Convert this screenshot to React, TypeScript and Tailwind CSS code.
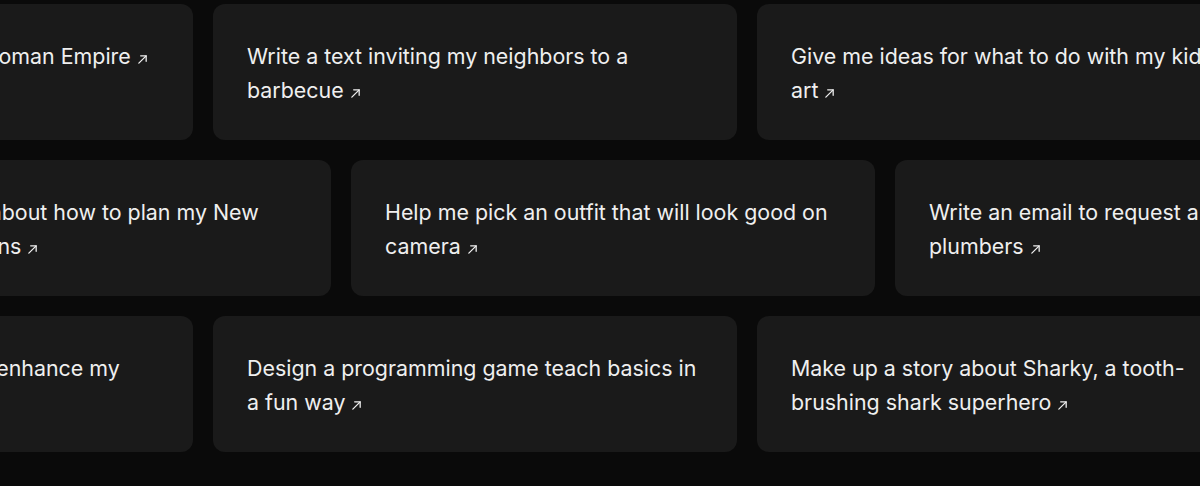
import React from 'react';

const rows: { offset: string; items: string[] }[] = [
  {
    offset: 'ml-[-331px]',
    items: [
      'Tell me a fun fact about the Roman Empire',
      'Write a text inviting my neighbors to a barbecue',
      "Give me ideas for what to do with my kids' art",
    ],
  },
  {
    offset: 'ml-[-193px]',
    items: [
      "Give me ideas about how to plan my New Year's resolutions",
      'Help me pick an outfit that will look good on camera',
      'Write an email to request a quote from local plumbers',
    ],
  },
  {
    offset: 'ml-[-331px]',
    items: [
      'Recommend new hobbies to enhance my weekends',
      'Design a programming game teach basics in a fun way',
      'Make up a story about Sharky, a tooth-brushing shark superhero',
    ],
  },
];

const Arrow = () => (
  <svg
    className="inline-block w-[11px] h-[11px] ml-[6px] align-[-1px]"
    viewBox="0 0 12 12"
    fill="none"
    stroke="currentColor"
    strokeWidth="1.4"
    strokeLinecap="round"
    strokeLinejoin="round"
  >
    <path d="M2 10 L10 2" />
    <path d="M4 2 H10 V8" />
  </svg>
);

export default function App() {
  return (
    <div className="w-[1200px] h-[486px] bg-[#0a0a0a] overflow-hidden pt-1 flex flex-col gap-5 font-['Inter',sans-serif]">
      {rows.map((row, i) => (
        <div key={i} className={`flex gap-5 ${row.offset}`}>
          {row.items.map((text) => (
            <div
              key={text}
              className="w-[524px] h-[136px] shrink-0 rounded-xl bg-[#1a1a1a] px-[34px] pt-[35px]"
            >
              <p className="text-[21.4px] leading-[34px] text-[#efefef] max-w-[456px]">
                {text}
                <Arrow />
              </p>
            </div>
          ))}
        </div>
      ))}
    </div>
  );
}
